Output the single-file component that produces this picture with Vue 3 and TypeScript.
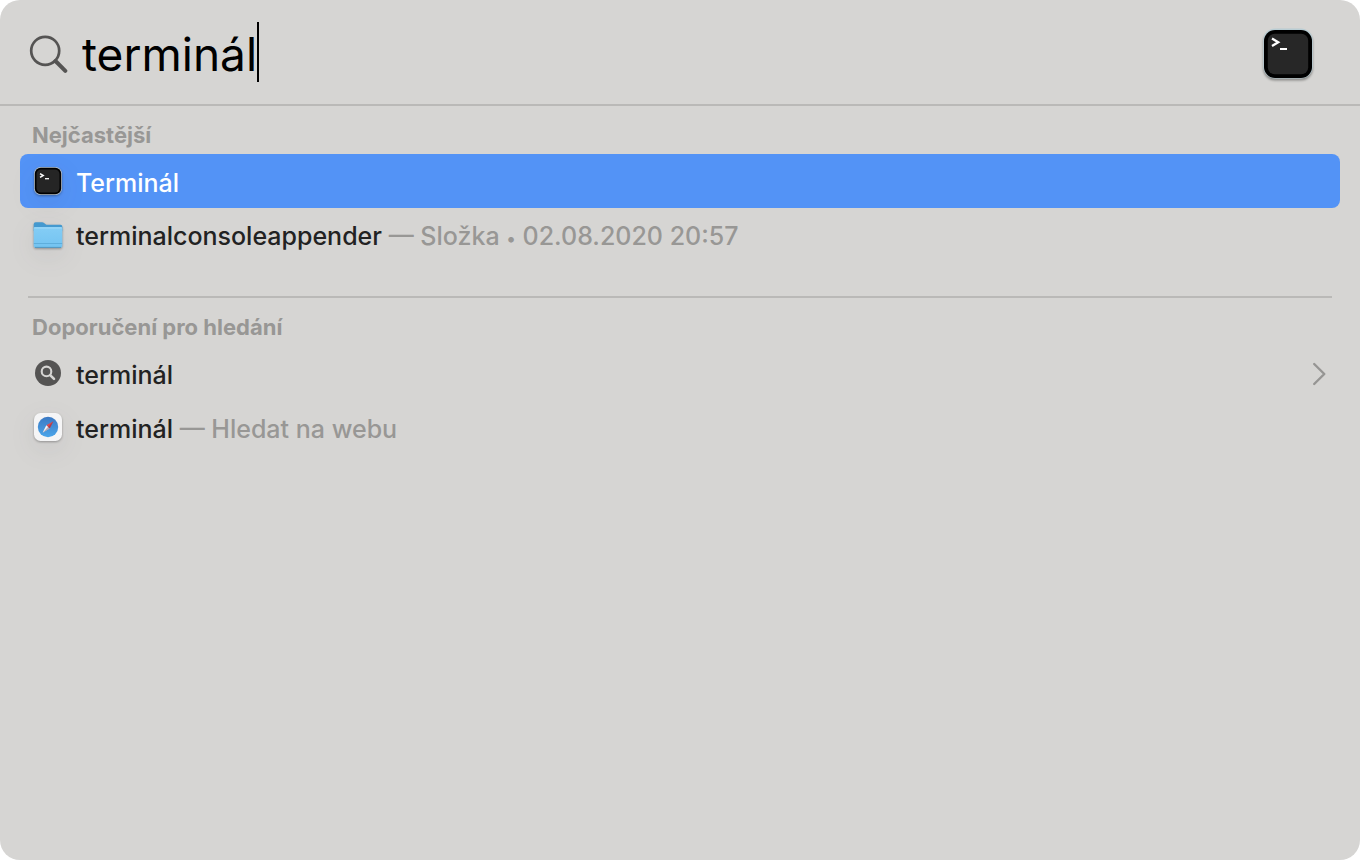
<script setup lang="ts">
import { ref } from 'vue'

type IconName = 'terminal' | 'folder' | 'search' | 'safari'

interface Result {
  id: string
  icon: IconName
  title: string
  detail?: string
  date?: string
  expandable?: boolean
}

interface Section {
  id: string
  heading: string
  results: Result[]
}

const query = ref('terminál')
const selected = ref('app')

const sections: Section[] = [
  {
    id: 'top',
    heading: 'Nejčastější',
    results: [
      { id: 'app', icon: 'terminal', title: 'Terminál' },
      { id: 'folder', icon: 'folder', title: 'terminalconsoleappender', detail: 'Složka', date: '02.08.2020 20:57' },
    ],
  },
  {
    id: 'suggestions',
    heading: 'Doporučení pro hledání',
    results: [
      { id: 'suggestion', icon: 'search', title: 'terminál', expandable: true },
      { id: 'web', icon: 'safari', title: 'terminál', detail: 'Hledat na webu' },
    ],
  },
]
</script>

<template>
  <main class="panel">
    <header class="bar">
      <label class="field">
        <svg class="glass" viewBox="0 0 40 40" aria-label="Hledat">
          <circle cx="17.2" cy="16.8" r="14" fill="none" stroke="#555453" stroke-width="2.7" />
          <path d="M27.5 27L37.3 36.8" stroke="#555453" stroke-width="4" stroke-linecap="round" />
        </svg>
        <input v-model="query" class="query" type="text" spellcheck="false" />
        <span class="caret" />
      </label>
      <svg class="app" viewBox="0 0 56 56" aria-hidden="true">
        <rect x="3.2" y="2.5" width="49.6" height="50" rx="12" fill="#b9cdd4" />
        <rect x="4" y="4" width="48" height="48" rx="11" fill="#000" />
        <rect x="7.8" y="7.8" width="40.4" height="40.4" rx="7" fill="#272727" />
        <path d="M12 12.6L18.2 16.3L12 20" fill="none" stroke="#fff" stroke-width="2.3" />
        <path d="M20 23H27" stroke="#fff" stroke-width="2" />
      </svg>
    </header>

    <section v-for="section in sections" :key="section.id" class="section">
      <h2 class="heading">{{ section.heading }}</h2>
      <button
        v-for="item in section.results"
        :key="item.id"
        type="button"
        class="row"
        :class="{ selected: item.id === selected }"
        @click="selected = item.id"
      >
        <svg v-if="item.icon === 'terminal'" class="icon" viewBox="0 0 32 32">
          <rect x="2" y="2" width="28" height="28" rx="6.5" fill="#b4c0cc" />
          <rect x="2.8" y="2.8" width="26.4" height="26.4" rx="6" fill="#000" />
          <rect x="4.5" y="4.5" width="23" height="23" rx="4.5" fill="#252525" />
          <path d="M8 8.6L11.2 10.5L8 12.4" fill="none" stroke="#fff" stroke-width="1.5" />
          <path d="M13 13.7H17" stroke="#fff" stroke-width="1.3" />
        </svg>
        <svg v-else-if="item.icon === 'folder'" class="icon" viewBox="0 0 32 32">
          <defs>
            <linearGradient id="folder-front" x1="0" y1="0" x2="0" y2="1">
              <stop offset="0" stop-color="#84cdf5" />
              <stop offset="1" stop-color="#73c3f1" />
            </linearGradient>
          </defs>
          <path d="M1.7 7V5.2Q1.7 3.2 3.7 3.2H10Q11.2 3.2 12 3.9L13.6 5.3Q14.2 5.8 15.2 5.8H28.5Q30.3 5.8 30.3 7.7V12H1.7Z" fill="#4499cf" />
          <path d="M1.7 9.4Q1.7 8 3.1 8H28.9Q30.3 8 30.3 9.4V27Q30.3 28.8 28.5 28.8H3.5Q1.7 28.8 1.7 27Z" fill="url(#folder-front)" />
          <path d="M2.2 9H29.8" stroke="#a0d9f7" stroke-width="1" />
          <path d="M1.8 24.5H30.2" stroke="#5eaedc" stroke-width="1" />
          <path d="M3 28.4H29" stroke="#5295bf" stroke-width="1" />
        </svg>
        <svg v-else-if="item.icon === 'search'" class="icon flat" viewBox="0 0 32 32">
          <circle cx="16" cy="16" r="13" fill="#555453" />
          <circle cx="14.5" cy="14.4" r="4.8" fill="none" stroke="#d6d5d3" stroke-width="2.1" />
          <path d="M18.4 18.3L22 21.9" stroke="#d6d5d3" stroke-width="2.6" stroke-linecap="round" />
        </svg>
        <svg v-else class="icon" viewBox="0 0 32 32">
          <defs>
            <linearGradient id="compass-face" x1="0" y1="0" x2="0" y2="1">
              <stop offset="0" stop-color="#3b79c3" />
              <stop offset="1" stop-color="#4aa5ea" />
            </linearGradient>
          </defs>
          <rect x="2" y="2" width="28" height="28" rx="6.5" fill="#f5f5f6" />
          <circle cx="16" cy="16" r="10.2" fill="url(#compass-face)" />
          <path d="M21.4 10.3L14.3 14.2L17.7 17.6Z" fill="#df4b50" />
          <path d="M10.6 21.7L14.3 14.2L17.7 17.6Z" fill="#f4f6f8" />
          <path d="M10.6 21.7L21.4 10.3L17.7 17.6Z" fill="#5b2c45" fill-opacity="0.4" />
        </svg>
        <span class="label">{{ item.title }}<span v-if="item.detail" class="detail"> — {{ item.detail }}</span><span v-if="item.date" class="detail">{{ ' ' }}<span class="dot">•</span>{{ ' ' }}{{ item.date }}</span></span>
        <svg v-if="item.expandable" class="chevron" viewBox="0 0 16 26">
          <path d="M2.2 4L12.3 14L2.2 24" fill="none" stroke="#969593" stroke-width="2.4" stroke-linecap="round" stroke-linejoin="round" />
        </svg>
      </button>
    </section>
  </main>
</template>

<style>
html,
body {
  background: #fff;
}
</style>

<style scoped>
.panel {
  box-sizing: border-box;
  min-height: 100vh;
  border-radius: 20px;
  background: #d6d5d3;
  font-family: Inter, "Liberation Sans", sans-serif;
  color: #222;
}

.bar {
  display: flex;
  align-items: center;
  justify-content: space-between;
  height: 104px;
  padding: 0 44px 0 28px;
  border-bottom: 2px solid #bab9b7;
}

.field {
  display: flex;
  align-items: center;
  flex: 1;
  min-width: 0;
}

.glass {
  flex: none;
  width: 40px;
  height: 40px;
  margin-top: 4px;
}

.query {
  box-sizing: border-box;
  field-sizing: content;
  max-width: 90%;
  height: 60px;
  margin: 0 0 0 14px;
  padding: 4px 0 0;
  border: 0;
  outline: 0;
  background: transparent;
  font-family: inherit;
  font-size: 46px;
  font-weight: 400;
  color: #000;
}

.caret {
  width: 2px;
  height: 60px;
  background: #000;
}

.app {
  flex: none;
  width: 56px;
  height: 56px;
  margin-top: 4px;
  filter: drop-shadow(0 2px 1px rgba(0, 0, 0, 0.35));
}

.section {
  padding: 8px 20px 34px;
}

.section + .section {
  position: relative;
  padding-top: 10px;
}

.section + .section::before {
  content: "";
  position: absolute;
  top: 0;
  left: 28px;
  right: 28px;
  height: 2px;
  background: #bab9b7;
}

.heading {
  margin: 0;
  padding: 2px 12px 0;
  font-size: 22px;
  font-weight: 700;
  line-height: 38px;
  color: #989795;
}

.row {
  display: flex;
  align-items: center;
  gap: 12px;
  width: 100%;
  height: 54px;
  padding: 0 12px;
  border: 0;
  border-radius: 8px;
  background: transparent;
  font-family: inherit;
  font-size: 25px;
  font-weight: 500;
  text-align: left;
  color: #222;
}

.row.selected {
  background: #5393f6;
  color: #fff;
}

.icon {
  flex: none;
  width: 32px;
  height: 32px;
  filter: drop-shadow(0 1px 1px rgba(0, 0, 0, 0.3)) drop-shadow(0 8px 12px rgba(70, 50, 80, 0.08));
}

.icon.flat {
  filter: none;
}

.label {
  flex: 1;
  min-width: 0;
  padding-top: 4px;
  line-height: 32px;
  white-space: nowrap;
}

.detail {
  color: #989795;
}

.dot {
  font-size: 18px;
}

.chevron {
  flex: none;
  width: 16px;
  height: 26px;
}
</style>
